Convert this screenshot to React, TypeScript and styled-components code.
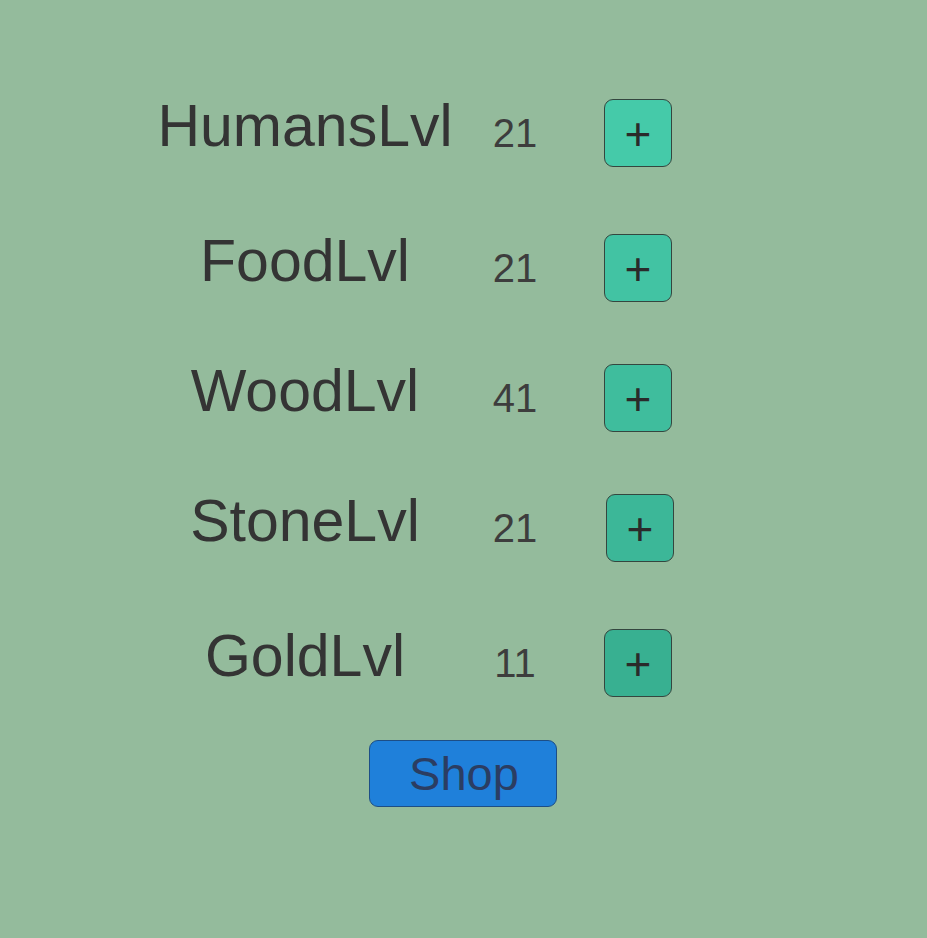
import React from "react";
import styled, { createGlobalStyle } from "styled-components";

const Global = createGlobalStyle`
  html, body {
    margin: 0;
    padding: 0;
    background: #94bb9c;
  }
  body {
    font-family: "Liberation Sans", Arial, sans-serif;
  }
`;

const Page = styled.div`
  width: 927px;
  height: 938px;
  background: #94bb9c;
  box-sizing: border-box;
  padding: 99px 0 0 140px;
  display: flex;
  flex-direction: column;
`;

const Row = styled.div<{ $top: number }>`
  display: grid;
  grid-template-columns: 330px 90px auto;
  grid-template-rows: 68px;
  align-items: center;
  height: 68px;
  margin-top: ${(p) => p.$top}px;
`;

const Label = styled.div`
  font-size: 59px;
  line-height: 54px;
  height: 54px;
  color: #343434;
  text-align: center;
  padding-bottom: 14px;
  white-space: nowrap;
`;

const Value = styled.div`
  font-size: 40px;
  line-height: 40px;
  color: #3d3d3d;
  text-align: center;
`;

const PlusButton = styled.button<{ $bg: string; $shift: number }>`
  width: 68px;
  height: 68px;
  margin-left: ${(p) => 44 + p.$shift}px;
  box-sizing: border-box;
  border: 1px solid #34463f;
  border-radius: 9px;
  background: ${(p) => p.$bg};
  color: #2a2a2a;
  font-family: "Liberation Sans", Arial, sans-serif;
  font-size: 46px;
  line-height: 1;
  padding: 2px 0 0 0;
  display: flex;
  align-items: center;
  justify-content: center;
`;

const ShopButton = styled.button`
  align-self: flex-start;
  margin: 43px 0 0 229px;
  width: 188px;
  height: 67px;
  box-sizing: border-box;
  border: 1px solid #1d4e86;
  border-radius: 9px;
  background: #1f80da;
  color: #2b3d62;
  font-family: "Liberation Sans", Arial, sans-serif;
  font-size: 47px;
  line-height: 1;
  padding: 0 0 0 2px;
  display: flex;
  align-items: center;
  justify-content: center;
`;

const rows = [
  { name: "HumansLvl", value: "21", top: 0, bg: "#45caa9", shift: 0 },
  { name: "FoodLvl", value: "21", top: 67, bg: "#42c3a3", shift: 0 },
  { name: "WoodLvl", value: "41", top: 62, bg: "#3fbd9d", shift: 0 },
  { name: "StoneLvl", value: "21", top: 62, bg: "#3cb798", shift: 2 },
  { name: "GoldLvl", value: "11", top: 67, bg: "#38b091", shift: 0 },
];

export default function App() {
  return (
    <>
      <Global />
      <Page>
        {rows.map((r) => (
          <Row key={r.name} $top={r.top}>
            <Label>{r.name}</Label>
            <Value>{r.value}</Value>
            <PlusButton $bg={r.bg} $shift={r.shift}>+</PlusButton>
          </Row>
        ))}
        <ShopButton>Shop</ShopButton>
      </Page>
    </>
  );
}
